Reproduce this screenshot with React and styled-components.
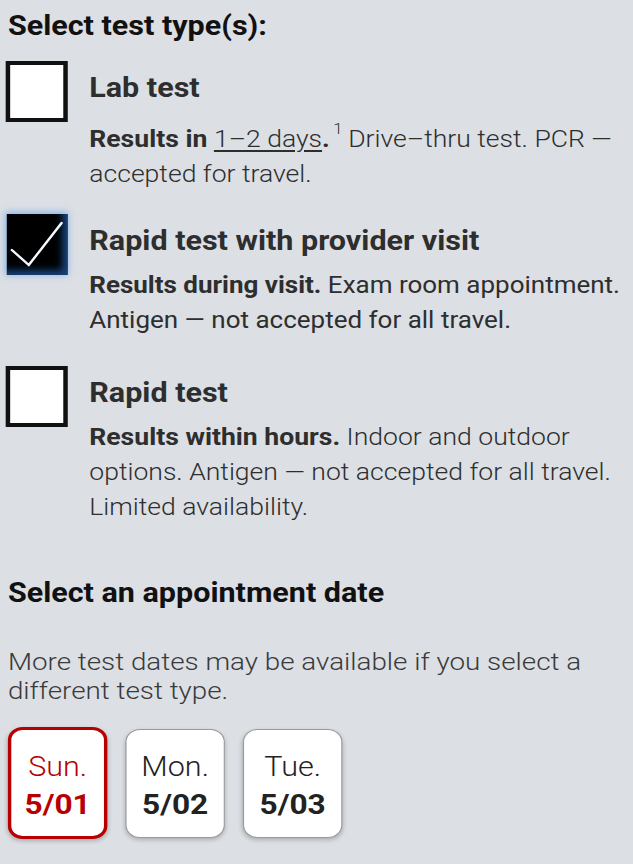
import React from "react";
import styled, { createGlobalStyle } from "styled-components";

const Global = createGlobalStyle`
  html, body { margin: 0; padding: 0; background: #dcdfe4; }
  body { font-family: Roboto, "Noto Sans", sans-serif; overflow: hidden; }
`;

/* The reference is rendered ~13% wider than Roboto's natural width,
   so the whole page is laid out at 560px and stretched to 633px. */
const Page = styled.div`
  width: 560px;
  height: 864px;
  box-sizing: border-box;
  padding: 9px 0 0 7px;
  background: #dcdfe4;
  overflow: hidden;
  transform: scaleX(1.13);
  transform-origin: 0 0;
`;

const Heading = styled.h2`
  margin: ${(p) => p.$mt || 0}px 0 ${(p) => p.$mb || 0}px;
  font-size: 27px;
  line-height: 34px;
  font-weight: 700;
  color: #111;
`;

const Option = styled.div`
  display: grid;
  grid-template-columns: 55px 1fr;
  column-gap: 19px;
  margin-left: -2px;
  margin-top: ${(p) => p.$mt || 0}px;
`;

const Box = styled.div`
  width: 55px;
  height: 61px;
  box-sizing: border-box;
  border: 4px solid #111;
  background: #fff;
`;

const CheckedBox = styled.div`
  width: 54px;
  height: 61px;
  margin-left: 1px;
  position: relative;
  box-sizing: border-box;
  background: #000;
  box-shadow: -1px -1px 6px 1px rgba(70, 150, 235, 0.55),
    inset -5px -5px 7px rgba(40, 110, 200, 0.6);
`;

const CheckSvg = styled.svg`
  position: absolute;
  inset: 0;
`;

const Text = styled.div`
  display: flex;
  flex-direction: column;
`;

const Title = styled.div`
  margin-top: 10px;
  font-size: 27px;
  line-height: 34px;
  font-weight: 700;
  color: #2e2e2e;
  white-space: nowrap;
`;

const Body = styled.div`
  margin-top: ${(p) => p.$mt}px;
  font-size: ${(p) => p.$size || 23.5}px;
  line-height: 35px;
  font-weight: ${(p) => p.$weight || 300};
  color: #2e2e2e;
  white-space: ${(p) => (p.$nowrap ? "nowrap" : "normal")};
`;

const Strong = styled.strong`
  font-weight: 700;
  color: #2e2e2e;
`;

const Under = styled.span`
  text-decoration: underline;
  text-underline-offset: 3px;
  text-decoration-thickness: 1.5px;
`;

const Sup = styled.sup`
  font-size: 15px;
  line-height: 0;
  vertical-align: 0;
  position: relative;
  top: -13px;
  margin: 0 5px 0 3px;
  font-weight: 300;
`;

const Note = styled.p`
  margin: 37px 0 0;
  font-size: 24.6px;
  line-height: 29px;
  font-weight: 300;
  color: #3a3a3a;
`;

const Dates = styled.div`
  display: flex;
  gap: 16px;
  margin-top: 22px;
  align-items: center;
`;

const DateCard = styled.button`
  width: 88px;
  height: ${(p) => (p.$sel ? 112 : 109)}px;
  box-sizing: border-box;
  border-radius: 13px;
  border: ${(p) => (p.$sel ? "3px solid #b80000" : "1px solid #9a9a9a")};
  background: #fff;
  box-shadow: 0 2px 4px rgba(0, 0, 0, 0.22);
  display: flex;
  flex-direction: column;
  align-items: center;
  justify-content: center;
  padding: 6px 0 0;
  font-family: Roboto, sans-serif;
  color: ${(p) => (p.$sel ? "#b80000" : "#222")};
`;

const Day = styled.span`
  font-size: 27px;
  line-height: 38px;
  font-weight: 300;
`;

const DateNum = styled.span`
  font-size: 28px;
  line-height: 38px;
  font-weight: 700;
`;

function Check() {
  return (
    <CheckSvg width="54" height="61" viewBox="0 0 54 61">
      <polyline
        points="4.5,36 19.5,51 48.5,9"
        fill="none"
        stroke="#f4f8ff"
        strokeWidth="2.2"
        strokeLinejoin="miter"
        strokeLinecap="round"
      />
    </CheckSvg>
  );
}

export default function App() {
  return (
    <>
      <Global />
      <Page>
        <Heading $mb={18}>Select test type(s):</Heading>

        <Option>
          <Box />
          <Text>
            <Title>Lab test</Title>
            <Body $mt={17}>
              <Strong>Results in </Strong>
              <Under>1–2 days</Under>
              <Strong>.</Strong>
              <Sup>1</Sup>
              Drive–thru test. PCR — accepted for travel.
            </Body>
          </Text>
        </Option>

        <Option $mt={22}>
          <CheckedBox>
            <Check />
          </CheckedBox>
          <Text>
            <Title>Rapid test with provider visit</Title>
            <Body $mt={10} $size={23} $weight={400} $nowrap>
              <Strong>Results during visit.</Strong> Exam room appointment.
              <br />
              Antigen — not accepted for all travel.
            </Body>
          </Text>
        </Option>

        <Option $mt={28}>
          <Box />
          <Text>
            <Title>Rapid test</Title>
            <Body $mt={10}>
              <Strong>Results within hours.</Strong> Indoor and outdoor options. Antigen — not
              accepted for all travel. Limited availability.
            </Body>
          </Text>
        </Option>

        <Heading $mt={51}>Select an appointment date</Heading>
        <Note>More test dates may be available if you select a different test type.</Note>

        <Dates>
          <DateCard $sel>
            <Day>Sun.</Day>
            <DateNum>5/01</DateNum>
          </DateCard>
          <DateCard>
            <Day>Mon.</Day>
            <DateNum>5/02</DateNum>
          </DateCard>
          <DateCard>
            <Day>Tue.</Day>
            <DateNum>5/03</DateNum>
          </DateCard>
        </Dates>
      </Page>
    </>
  );
}
